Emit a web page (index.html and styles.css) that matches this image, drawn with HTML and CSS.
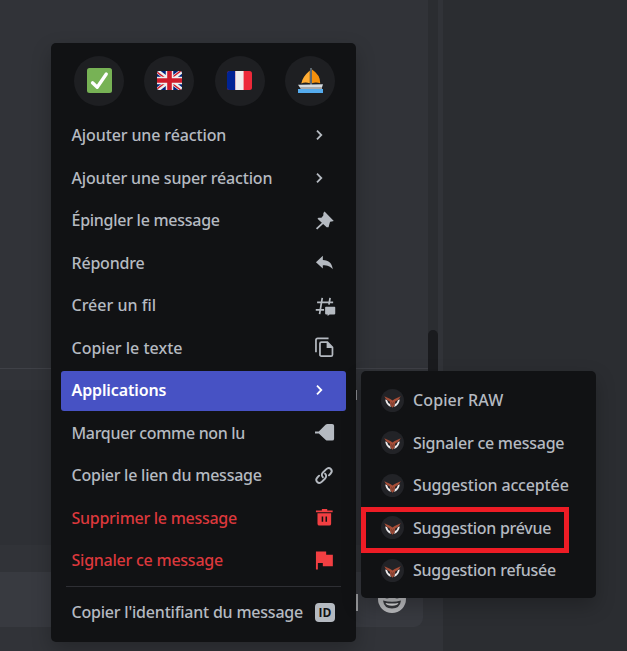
FILE: index.html
```html
<!DOCTYPE html>
<html lang="fr">
<head>
<meta charset="utf-8">
<title>Menu du message</title>
<link rel="stylesheet" href="styles.css">
</head>
<body>
<svg width="0" height="0" class="defs">
  <symbol id="chev" viewBox="0 0 20 20"><path d="M8 5.6 12.3 10 8 14.4" fill="none" stroke="currentColor" stroke-width="1.8"/></symbol>
  <symbol id="owl" viewBox="0 0 23 23">
    <circle cx="11.5" cy="11.5" r="11.5" fill="#222327"/>
    <path d="M4.2 10.5 6 11 7.4 14 9.4 15.2 9.7 18Q5 16 4.2 10.5ZM18.8 10.5 17 11 15.6 14 13.6 15.2 13.3 18Q18 16 18.8 10.5Z" fill="#eceaeb"/>
    <path d="M3.3 7.3 9.3 10.1 11.5 11.6 13.7 10.1 19.7 7.3 17.7 10.4 14.2 12.4 13.5 16.5 11.5 18.8 9.5 16.5 8.8 12.4 5.3 10.4Z" fill="#a64e38"/>
    <path d="M9.9 13.2 11 14.2 10.9 16.5M13.1 13.2 12 14.2 12.1 16.5" fill="none" stroke="#65372f" stroke-width=".7"/>
  </symbol>
</svg>
<div class="app">
  <main class="chat">
    <div class="messages"><div class="older"></div><div class="recent"></div></div>
    <div class="composer">
      <i class="gif"></i>
      <svg class="smile" viewBox="0 0 28 28"><circle cx="14" cy="14" r="14" fill="#b9babd"/><path d="M5 15.5Q14 18 23 15.5 22 23.5 14 23.5T5 15.5Z" fill="#37383c"/><path d="M7.5 18Q14 19.2 20.5 18 19.5 20.8 14 20.8T7.5 18Z" fill="#dcdcdd"/><circle cx="9" cy="10.5" r="3" fill="#37383c"/><circle cx="19" cy="10.5" r="3" fill="#37383c"/></svg>
    </div>
  </main>
  <div class="track"><div class="thumb"></div></div>
  <div class="gutter"></div>
</div>
<i class="fragment"></i>

<nav class="menu main-menu">
  <div class="reactions">
    <span><svg viewBox="0 0 25 25"><rect width="25" height="25" rx="2.5" fill="#77b255"/><path d="M5.5 14.8 10.2 19.3 19.3 6" fill="none" stroke="#fff" stroke-width="3.3" stroke-linecap="round" stroke-linejoin="round"/></svg></span>
    <span><svg viewBox="0 0 25 25"><clipPath id="uk"><rect y="3" width="25" height="19" rx="2"/></clipPath><g clip-path="url(#uk)"><path d="M0 3H25V22H0Z" fill="#00247d"/><path d="M0 3 25 22M25 3 0 22" stroke="#eee" stroke-width="4.4"/><path d="M0 4 25 23M25 2 0 21" stroke="#cf1b2b" stroke-width="1.4"/><path d="M12.5 3V22M0 12.5H25" stroke="#eee" stroke-width="7.5"/><path d="M12.5 3V22M0 12.5H25" stroke="#cf1b2b" stroke-width="4.6"/></g></svg></span>
    <span><svg viewBox="0 0 25 25"><rect y="3" width="25" height="19" rx="2.5" fill="#ed2939"/><path d="M2.5 3H8.3V22H2.5Q0 22 0 19.5V5.5Q0 3 2.5 3Z" fill="#002395"/><path d="M8.3 3H16.6V22H8.3Z" fill="#eee"/></svg></span>
    <span><svg class="boat" viewBox="0 0 25 25"><path d="M0 21H25V25H0Z" fill="#55acee"/><path d="M11.8 2.5V15.2Q7 13.8 3.3 15.5 4.3 9 11.8 2.5Z" fill="#ffac33"/><path d="M14 1.5Q22.5 7 22.2 15.3 18 13.8 14 15.2Z" fill="#f4900c"/><path d="M12.4 0H13.6V17.5H12.4Z" fill="#8899a6"/><path d="M0 16.8 25 16.2 23.5 21H3Z" fill="#d5dce1"/><path d="M2 19H24L23.5 21H3Z" fill="#aaa8a8"/></svg></span>
  </div>
  <div class="row"><span class="t1">Ajouter une réaction</span><svg class="chevron"><use href="#chev"/></svg></div>
  <div class="row"><span class="t2">Ajouter une super réaction</span><svg class="chevron"><use href="#chev"/></svg></div>
  <div class="row"><span class="t3">Épingler le message</span><svg viewBox="0 0 22 22"><path d="M10 1.5 19.7 11.5 17.5 12 15.8 12.3 15 15 14.2 18 12.2 18.2 8.5 14.6 2.3 20.5 1 19.2 7.2 13.3 2.6 9.2 3.6 8 6.7 8.1 8.7 5.8 8.8 3.1Z" fill="currentColor"/></svg></div>
  <div class="row"><span class="t4">Répondre</span><svg viewBox="0 0 22 22"><path d="M8.2 4V8.4C14.5 8.4 18 12 18.6 18.2 16.2 14.8 13.3 13.8 8.2 13.8V17.4L1 10.8Z" fill="currentColor"/></svg></div>
  <div class="row"><span>Créer un fil</span><svg viewBox="0 0 22 22"><path d="M2.2 7.8H19M.8 15.5H9.5M7.6 3 4.8 20M15.8 3 14.6 10" fill="none" stroke="currentColor" stroke-width="1.8"/><path d="M11.4 12.2H20.4Q21.2 12.2 21.2 13V19.5Q21.2 20.3 20.4 20.3H15.4L13.2 22V20.3H11.4Q10.6 20.3 10.6 19.5V13Q10.6 12.2 11.4 12.2Z" fill="currentColor"/></svg></div>
  <div class="row"><span>Copier le texte</span><svg viewBox="0 0 22 22"><path d="M1 16V3.2Q1 1.5 2.8 1.5H14.2" fill="none" stroke="currentColor" stroke-width="1.8"/><path d="M6.7 5.4H13L18.3 10.8V18.5Q18.3 20 16.8 20H6.7Q5.2 20 5.2 18.5V6.9Q5.2 5.4 6.7 5.4Z" fill="none" stroke="currentColor" stroke-width="1.8"/><path d="M12.2 5V11.6H19Z" fill="currentColor"/></svg></div>
  <div class="row active"><span class="t7">Applications</span><svg class="chevron"><use href="#chev"/></svg></div>
  <div class="row"><span class="t8">Marquer comme non lu</span><svg viewBox="0 0 22 22"><path d="M0 10H4L11 3Q12 2 13 2H18Q20 2 20 4V17.5Q20 19.5 18 19.5H13Q12 19.5 11 18.5L4 12H0Z" fill="currentColor"/></svg></div>
  <div class="row"><span class="t9">Copier le lien du message</span><svg viewBox="0 0 22 22"><g fill="none" stroke="currentColor" stroke-width="2" stroke-linecap="round"><path d="M8.3 12.8C6.7 11.3 6.8 9.4 8.3 7.9L11.6 4.6C15.2 1.1 19.7 5.6 16.2 9.2L14.6 10.8"/><path d="M10.6 9.2C12.1 10.7 12.1 12.6 10.6 14.1L7.3 17.4C3.7 20.9-.8 16.4 2.7 12.8L4.3 11.2"/></g></svg></div>
  <div class="row danger"><span class="t10">Supprimer le message</span><svg viewBox="0 0 22 22"><path d="M1 3.6H7.2V2H12.8V3.6H18.5V5.6H1Z" fill="currentColor"/><path fill-rule="evenodd" d="M2.6 6.6H16.9V17.5Q16.9 19.5 14.9 19.5H4.6Q2.6 19.5 2.6 17.5ZM7 10V15.5H8.6V10ZM11 10V15.5H12.6V10Z" fill="currentColor"/></svg></div>
  <div class="row danger"><span class="t11">Signaler ce message</span><svg viewBox="0 0 22 22"><path d="M1 1.5H11.7V5H18.7V17H8.2V13.5H3V20.5H1Z" fill="currentColor"/></svg></div>
  <hr>
  <div class="row"><span class="t12">Copier l'identifiant du message</span><b class="id">ID</b></div>
</nav>

<nav class="menu sub-menu">
  <div class="row"><svg class="avatar"><use href="#owl"/></svg><span class="s1">Copier RAW</span></div>
  <div class="row"><svg class="avatar"><use href="#owl"/></svg><span class="s2">Signaler ce message</span></div>
  <div class="row"><svg class="avatar"><use href="#owl"/></svg><span class="s3">Suggestion acceptée</span></div>
  <div class="row"><svg class="avatar"><use href="#owl"/></svg><span class="s4">Suggestion prévue</span></div>
  <div class="row"><svg class="avatar"><use href="#owl"/></svg><span class="s5">Suggestion refusée</span></div>
</nav>
<div class="highlight"></div>
</body>
</html>
```
FILE: styles.css
```css
* { box-sizing: border-box; }
body { margin: 0; background: #2b2d31; font: 500 16px "Noto Sans", sans-serif; color: #b5bac1; overflow: hidden; }
.defs { position: absolute; }
.app { display: flex; height: 651px; background: linear-gradient(90deg, #313338 443px, #2b2d31 443px); }
.chat { width: 428px; display: flex; flex-direction: column; }
.messages { height: 572px; }
.older { height: 369px; border-bottom: 1px solid #3f4147; }
.recent { height: 155px; margin-top: 21px; background: #2e3035; }
.composer { position: relative; height: 55px; width: 423px; background: #383a40; border-radius: 0 9px 9px 0; }
.gif { position: absolute; left: 352px; top: 22px; width: 6px; height: 17px; background: #a5a6aa; }
.smile { position: absolute; left: 378px; top: 13px; width: 28px; height: 28px; }
.track { width: 10px; background: #2b2d31; padding-top: 330px; height: 572px; }
.thumb { height: 220px; border-radius: 5px; background: #1a1b1e; }
.gutter { width: 5px; }
.fragment { position: absolute; left: 354px; top: 390px; width: 3px; height: 10px; background: #96989d; }
.menu { position: absolute; background: #111214; border-radius: 5px; padding: 10px; box-shadow: 0 8px 20px rgba(0, 0, 0, .24); display: flex; flex-direction: column; gap: 2.5px; }
.main-menu { left: 51px; top: 43px; width: 305px; height: 599px; }
.sub-menu { left: 361px; top: 371px; width: 235px; height: 227px; padding-top: 9px; }
.reactions { display: flex; justify-content: space-between; height: 60px; padding: 3px 11px 0 13px; }
.reactions span { width: 50px; height: 50px; border-radius: 50%; background: #1e1f22; display: grid; place-items: center; }
.reactions svg { width: 25px; height: 25px; margin-bottom: 1px; }
.reactions .boat { margin-left: 2px; }
.row { flex: 0 0 40px; height: 40px; padding: 0 10px 0 10.5px; display: flex; align-items: center; justify-content: space-between; border-radius: 3px; white-space: nowrap; }
.row > svg { width: 21px; height: 21px; flex: none; }
.row > .chevron { width: 20px; height: 20px; margin-right: 7px; }
.active { background: #4752c4; color: #fff; font-weight: 600; position: relative; top: .5px; }
.active > * { margin-top: -1px; }
.danger { color: #dc383c; }
.danger svg { color: #f23f42; }
hr { width: 275px; height: 1px; border: 0; margin: 3px auto; background: #2e2f34; flex: none; }
.id { width: 20px; height: 19px; margin-right: 1px; border-radius: 4px; background: #b5bac1; color: #111214; font: 700 12px/19px "Open Sans", sans-serif; text-align: center; }
.t1 { letter-spacing: -.12px; }
.t2 { letter-spacing: -.16px; }
.t3 { letter-spacing: -.27px; }
.t4 { letter-spacing: -.2px; }
.t7 { letter-spacing: -.12px; }
.t8 { letter-spacing: -.32px; }
.t9 { letter-spacing: -.24px; }
.t10 { letter-spacing: -.27px; }
.t11 { letter-spacing: -.24px; }
.t12 { letter-spacing: -.21px; }
.s1 { letter-spacing: .1px; }
.s2 { letter-spacing: -.25px; }
.s3 { letter-spacing: -.15px; }
.s4 { letter-spacing: -.28px; }
.s5 { letter-spacing: -.26px; }
.sub-menu .row { justify-content: flex-start; gap: 9px; padding-left: 10px; }
.row > .avatar { width: 23px; height: 23px; }
.highlight { position: absolute; left: 361px; top: 507px; width: 208px; height: 46px; border: 5px solid #ee1c25; }
```
